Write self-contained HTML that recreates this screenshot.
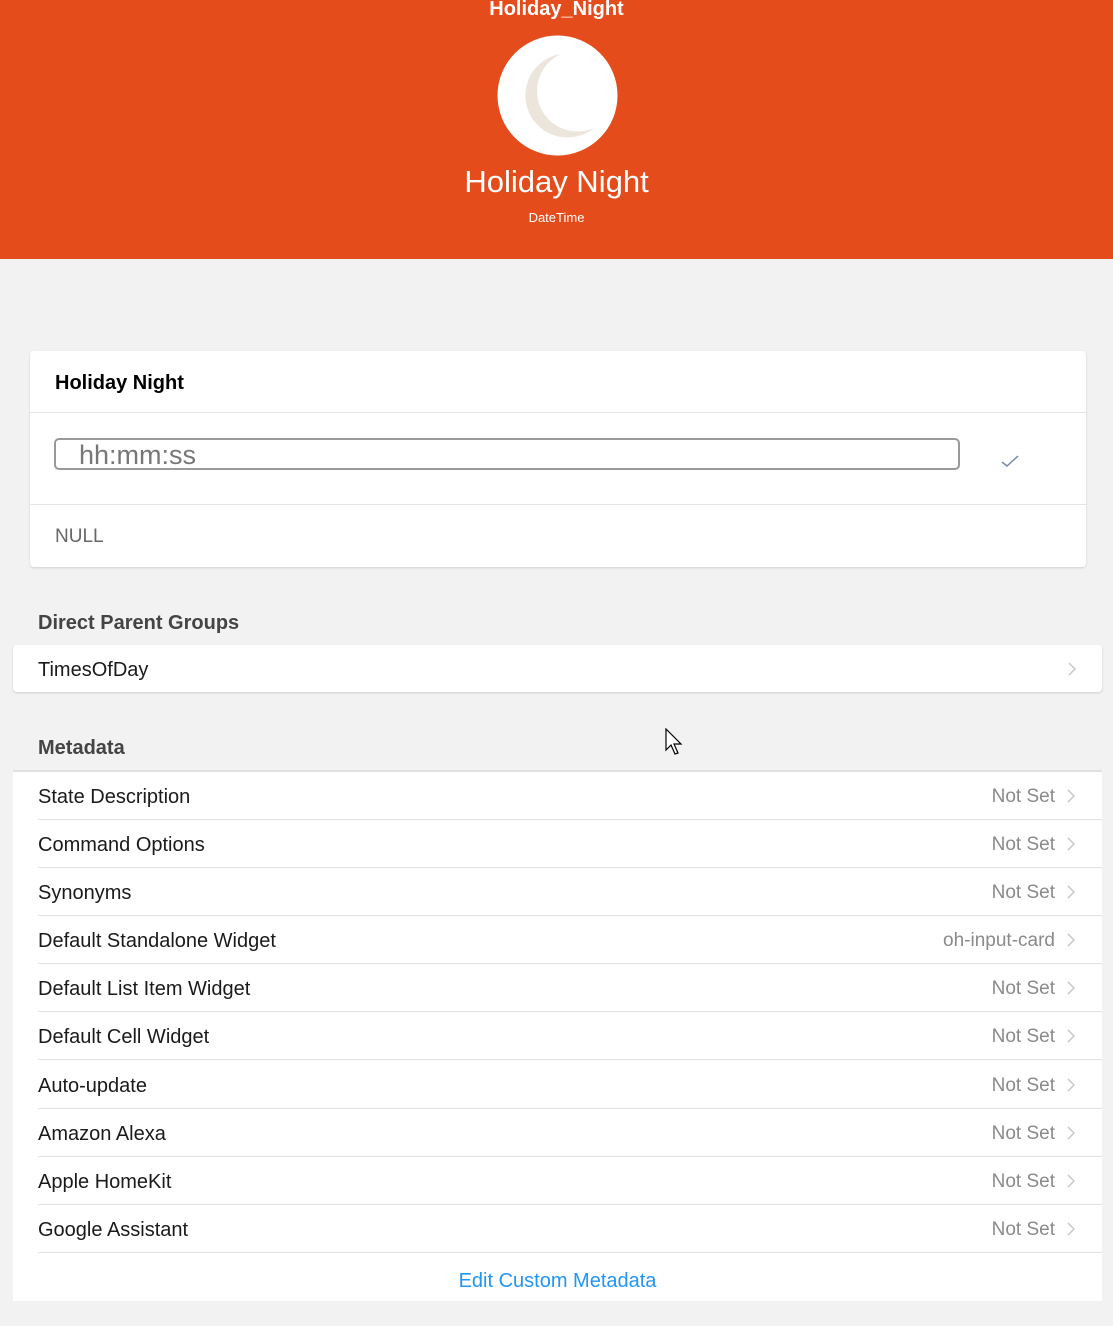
<!DOCTYPE html>
<html><head><style>
*{margin:0;padding:0;box-sizing:border-box}
body{width:1113px;height:1326px;background:#f2f2f2;font-family:"Liberation Sans",sans-serif;position:relative;overflow:hidden;color:#1a1a1a}
.hdr{position:absolute;left:0;top:0;width:1113px;height:259px;background:#e54c1c;color:#fff;text-align:center}
.abs{position:absolute}
.card{position:absolute;left:30px;top:351px;width:1056px;height:216px;background:#fff;border-radius:4px;box-shadow:0 1px 2px rgba(0,0,0,.15)}
.list{position:absolute;left:13px;width:1089px;background:#fff}
.row{position:absolute;left:25px;right:0;height:48px;border-bottom:1px solid #e0e0e0;font-size:20px;line-height:50px}
.row .v{position:absolute;right:47px;top:0;color:#8a8a8a;font-size:19px}
.chev{position:absolute;right:26px;top:17px;width:9px;height:14px}
.sec{position:absolute;left:38px;font-size:20px;font-weight:bold;color:#444}
</style></head><body>
<div class="hdr">
 <div class="abs" style="left:0;width:1113px;top:-2px;font-size:20px;font-weight:bold">Holiday_Night</div>
 <svg class="abs" style="left:497px;top:35px" width="121" height="121" viewBox="0 0 121 121">
  <circle cx="60.5" cy="60.5" r="60" fill="#fff"/>
  <path d="M64 19 A42 42 0 1 0 97 93 A37 37 0 1 1 64 19Z" fill="#ebe5dc"/>
 </svg>
 <div class="abs" style="left:0;width:1113px;top:164px;font-size:31px">Holiday Night</div>
 <div class="abs" style="left:0;width:1113px;top:210px;font-size:13px">DateTime</div>
</div>
<div class="card">
 <div class="abs" style="left:25px;top:21px;font-size:20px;font-weight:bold;color:#000">Holiday Night</div>
 <div class="abs" style="left:0;top:61px;width:100%;border-top:1px solid #e4e4e4"></div>
 <div class="abs" style="left:24px;top:87px;width:906px;height:32px;border:2px solid #999;border-radius:5px;font-size:27px;color:#777;padding-left:23px;line-height:30px">hh:mm:ss</div>
 <svg class="abs" style="left:970px;top:103px" width="20" height="14"><path d="M2 8 L7 12 L18 2" stroke="#7a8aa8" stroke-width="1.5" fill="none"/></svg>
 <div class="abs" style="left:0;top:153px;width:100%;border-top:1px solid #e4e4e4"></div>
 <div class="abs" style="left:25px;top:175px;font-size:19px;color:#666">NULL</div>
</div>
<div class="sec" style="top:612px">Direct Parent Groups</div>
<div class="list" style="top:645px;height:47px;border-radius:4px;box-shadow:0 1px 2px rgba(0,0,0,.15)">
 <div class="row" style="top:0;border:none;height:47px;line-height:51px">TimesOfDay
 <svg class="chev" style="right:25px" viewBox="0 0 9 14"><path d="M1 1 L7 7 L1 13" stroke="#c8c8c8" stroke-width="1.5" fill="none"/></svg></div>
</div>
<div class="sec" style="top:737px">Metadata</div>
<div class="list" style="top:770px;height:531px;border-top:2px solid #e0e0e0">
 <div class="row" style="top:0">State Description<span class="v">Not Set</span><svg class="chev" viewBox="0 0 9 14"><path d="M1 1 L7 7 L1 13" stroke="#c8c8c8" stroke-width="1.5" fill="none"/></svg></div>
 <div class="row" style="top:48px">Command Options<span class="v">Not Set</span><svg class="chev" viewBox="0 0 9 14"><path d="M1 1 L7 7 L1 13" stroke="#c8c8c8" stroke-width="1.5" fill="none"/></svg></div>
 <div class="row" style="top:96px">Synonyms<span class="v">Not Set</span><svg class="chev" viewBox="0 0 9 14"><path d="M1 1 L7 7 L1 13" stroke="#c8c8c8" stroke-width="1.5" fill="none"/></svg></div>
 <div class="row" style="top:144px">Default Standalone Widget<span class="v">oh-input-card</span><svg class="chev" viewBox="0 0 9 14"><path d="M1 1 L7 7 L1 13" stroke="#c8c8c8" stroke-width="1.5" fill="none"/></svg></div>
 <div class="row" style="top:192px">Default List Item Widget<span class="v">Not Set</span><svg class="chev" viewBox="0 0 9 14"><path d="M1 1 L7 7 L1 13" stroke="#c8c8c8" stroke-width="1.5" fill="none"/></svg></div>
 <div class="row" style="top:240px">Default Cell Widget<span class="v">Not Set</span><svg class="chev" viewBox="0 0 9 14"><path d="M1 1 L7 7 L1 13" stroke="#c8c8c8" stroke-width="1.5" fill="none"/></svg></div>
 <div class="row" style="top:289px">Auto-update<span class="v">Not Set</span><svg class="chev" viewBox="0 0 9 14"><path d="M1 1 L7 7 L1 13" stroke="#c8c8c8" stroke-width="1.5" fill="none"/></svg></div>
 <div class="row" style="top:337px">Amazon Alexa<span class="v">Not Set</span><svg class="chev" viewBox="0 0 9 14"><path d="M1 1 L7 7 L1 13" stroke="#c8c8c8" stroke-width="1.5" fill="none"/></svg></div>
 <div class="row" style="top:385px">Apple HomeKit<span class="v">Not Set</span><svg class="chev" viewBox="0 0 9 14"><path d="M1 1 L7 7 L1 13" stroke="#c8c8c8" stroke-width="1.5" fill="none"/></svg></div>
 <div class="row" style="top:433px">Google Assistant<span class="v">Not Set</span><svg class="chev" viewBox="0 0 9 14"><path d="M1 1 L7 7 L1 13" stroke="#c8c8c8" stroke-width="1.5" fill="none"/></svg></div>
 <div class="abs" style="left:0;width:100%;top:484px;text-align:center;font-size:20px;color:#2196f3;line-height:50px">Edit Custom Metadata</div>
</div>
<svg class="abs" style="left:665px;top:728px" width="18" height="30" viewBox="0 0 18 30"><path d="M1 1 L1 22 L6 17 L10 26 L13 25 L9 16 L16 16 Z" fill="#fff" stroke="#000" stroke-width="1.2"/></svg>
</body></html>
